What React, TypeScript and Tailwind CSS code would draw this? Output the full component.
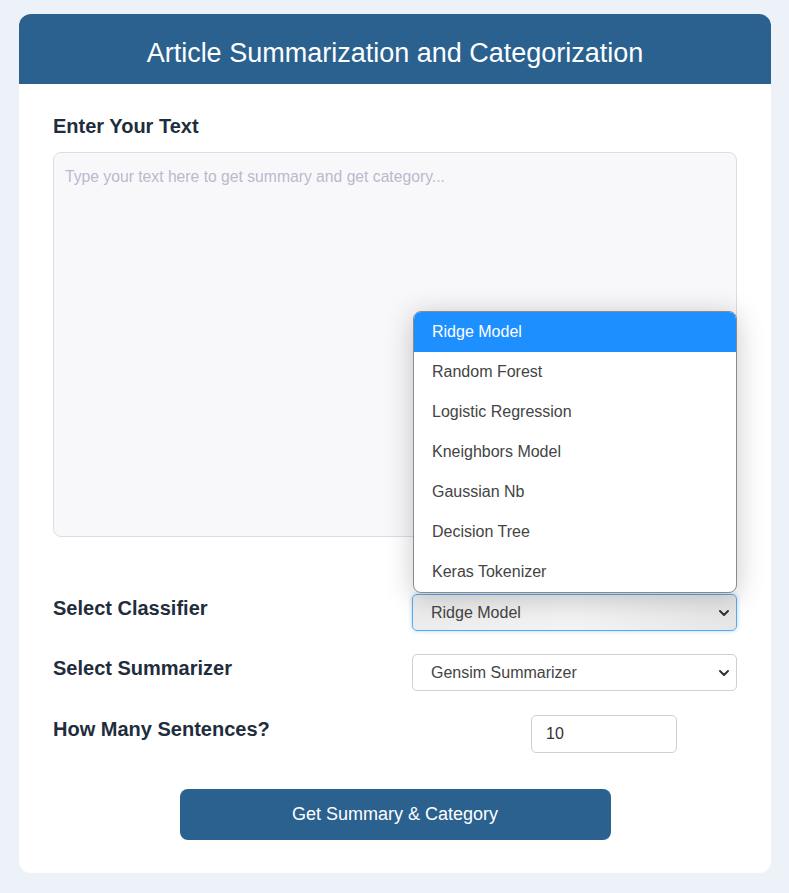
import React, { useState } from 'react';

const CLASSIFIERS = [
    'Ridge Model',
    'Random Forest',
    'Logistic Regression',
    'Kneighbors Model',
    'Gaussian Nb',
    'Decision Tree',
    'Keras Tokenizer',
];

const Chevron: React.FC = () => (
    <svg width="12" height="8" viewBox="0 0 12 8" className="absolute right-[6px] top-1/2 -translate-y-1/2">
        <path d="M2 2 L6 6 L10 2" fill="none" stroke="#333" strokeWidth="2" strokeLinecap="round" strokeLinejoin="round" />
    </svg>
);

export default function App() {
    const [text, setText] = useState('');
    const [classifier] = useState('Ridge Model');
    const [count, setCount] = useState('10');

    return (
        <div className="min-h-[893px] bg-[#edf1f8] pt-[14px] pb-[21px] pl-[19px] pr-[18px]" style={{ fontFamily: '"Liberation Sans", Arial, sans-serif' }}>
            <div className="bg-white rounded-[12px] overflow-visible">
                {/* Header */}
                <div className="h-[70px] bg-[#2a618f] rounded-t-[12px] flex items-center justify-center">
                    <h1 className="text-white text-[27px] leading-none pt-[8px]">Article Summarization and Categorization</h1>
                </div>

                <div className="px-[34px] pt-[32px] pb-[33px]">
                    <label className="block text-[20px] font-bold text-[#1f2d3d] leading-none">Enter Your Text</label>
                    <textarea
                        value={text}
                        onChange={e => setText(e.target.value)}
                        placeholder="Type your text here to get summary and get category..."
                        className="mt-[16px] block w-full h-[385px] resize-none rounded-[8px] border border-[#dcdce6] bg-[#f8f8fb] px-[11px] pt-[12px] pb-[14px] text-[15.7px] text-[#333] placeholder:text-[#bbb8cc] outline-none"
                    />

                    {/* Classifier */}
                    <div className="mt-[57px] flex items-start">
                        <div className="w-[359px] text-[20px] font-bold text-[#1f2d3d] leading-none pt-[4px]">Select Classifier</div>
                        <div className="relative flex-1">
                            <div className="absolute bottom-full left-[1px] right-0 mb-[1px] rounded-[8px] border border-[#8a8a8a] bg-white overflow-hidden shadow-[0_4px_28px_rgba(0,0,0,0.22)] z-10">
                                {CLASSIFIERS.map(c => (
                                    <div
                                        key={c}
                                        className={`h-[40px] flex items-center pl-[18px] text-[16px] ${c === classifier ? 'bg-[#1e8fff] text-white' : 'text-[#444]'}`}
                                    >
                                        {c}
                                    </div>
                                ))}
                            </div>
                            <div className="relative h-[37px] rounded-[5px] border border-[#5aa9f0] bg-gradient-to-r from-[#ececec] via-[#f3f3f3] to-[#e6e6e6] shadow-[0_0_4px_rgba(80,160,240,0.45)] flex items-center pl-[18px] text-[16px] text-[#444]">
                                {classifier}
                                <Chevron />
                            </div>
                        </div>
                    </div>

                    {/* Summarizer */}
                    <div className="mt-[23px] flex items-start">
                        <div className="w-[359px] text-[20px] font-bold text-[#1f2d3d] leading-none pt-[4px]">Select Summarizer</div>
                        <div className="relative flex-1 h-[37px] rounded-[5px] border border-[#cfcfcf] bg-white flex items-center pl-[18px] text-[16px] text-[#444]">
                            Gensim Summarizer
                            <Chevron />
                        </div>
                    </div>

                    {/* Sentences */}
                    <div className="mt-[24px] flex items-start">
                        <div className="w-[478px] text-[20px] font-bold text-[#1f2d3d] leading-none pt-[4px]">How Many Sentences?</div>
                        <input
                            value={count}
                            onChange={e => setCount(e.target.value)}
                            className="w-[146px] h-[38px] rounded-[5px] border border-[#cfcfcf] bg-white pl-[14px] text-[16px] text-[#333] outline-none"
                        />
                    </div>

                    <div className="mt-[36px] flex justify-center">
                        <button className="w-[431px] h-[51px] rounded-[8px] bg-[#2a618f] text-white text-[18px]">
                            Get Summary &amp; Category
                        </button>
                    </div>
                </div>
            </div>
        </div>
    );
}
